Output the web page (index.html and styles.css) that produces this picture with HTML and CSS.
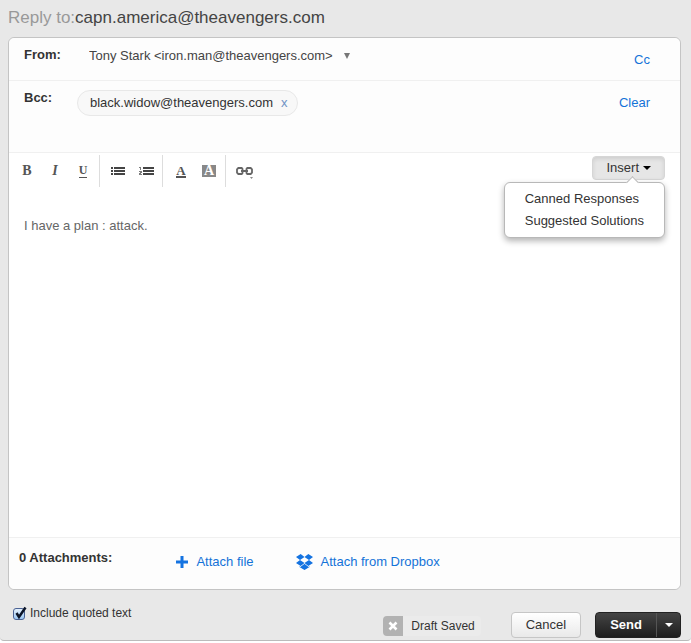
FILE: index.html
```html
<!DOCTYPE html>
<html lang="en">
<head>
    <meta charset="UTF-8">
    <meta name="viewport" content="width=device-width, initial-scale=1.0">
    <title>Reply</title>
    <link rel="stylesheet" href="styles.css">
</head>
<body>
    <form class="reply">
        <h1 class="reply-title"><span>Reply to:</span>capn.america@theavengers.com</h1>

        <div class="card">
            <div class="row from-row">
                <label class="row-label" for="from">From:</label>
                <div class="from-select">
                    <select id="from" name="from">
                        <option>Tony Stark &lt;iron.man@theavengers.com&gt;</option>
                    </select>
                    <svg width="6" height="6" viewBox="0 0 6 6"><path d="M0 0h6L3 6z" fill="#777"/></svg>
                </div>
                <a class="row-link" href="#cc">Cc</a>
            </div>

            <div class="row bcc-row">
                <span class="row-label">Bcc:</span>
                <div class="recipient">
                    black.widow@theavengers.com
                    <button type="button" aria-label="Remove">x</button>
                </div>
                <a class="row-link" href="#clear">Clear</a>
            </div>

            <div class="toolbar">
                <div class="tool-group">
                    <button type="button" class="tool">B</button>
                    <button type="button" class="tool italic">I</button>
                    <button type="button" class="tool underline"><span>U</span></button>
                </div>
                <div class="tool-group">
                    <button type="button" class="tool" aria-label="Bulleted list">
                        <svg width="14" height="8" viewBox="0 0 14 8" fill="#444"><path d="M0 0h2v2H0zM3 0h11v2H3zM0 3h2v2H0zM3 3h11v2H3zM0 6h2v2H0zM3 6h11v2H3z"/></svg>
                    </button>
                    <button type="button" class="tool" aria-label="Numbered list">
                        <svg width="15" height="8" viewBox="0 0 15 8" fill="#444"><path d="M4 0h11v2H4zM4 3h11v2H4zM4 6h11v2H4z"/><path d="M0 0h2v3H1V1H0zM0 4h3v2H2v1h1v1H0V6h1V5H0z" opacity=".7"/></svg>
                    </button>
                </div>
                <div class="tool-group">
                    <button type="button" class="tool text-color"><span>A</span></button>
                    <button type="button" class="tool back-color"><span>A</span></button>
                </div>
                <div class="tool-group">
                    <button type="button" class="tool" aria-label="Link">
                        <svg width="17" height="16" viewBox="0 0 17 16">
                            <path d="M6.500 7V5.800L5.700 5H2.300L1 6.300v3.400L2.300 11h3.400l.8-.8V9M10.500 7V5.800l.8-.8h3.400L16 6.300v3.400L14.700 11h-3.400l-.8-.8V9M5 8h7" fill="none" stroke="#666" stroke-width="1.800"/>
                            <path d="M14 14h3l-1.500 2z" fill="#888"/>
                        </svg>
                    </button>
                </div>
                <div class="insert">
                    <button type="button" class="insert-button">Insert
                        <svg width="8" height="4" viewBox="0 0 8 4"><path d="M0 0h8L4 4z"/></svg>
                    </button>
                    <ul class="insert-menu">
                        <li><a href="#canned">Canned Responses</a></li>
                        <li><a href="#solutions">Suggested Solutions</a></li>
                    </ul>
                </div>
            </div>

            <textarea class="message" name="message" aria-label="Message">I have a plan : attack.</textarea>

            <div class="attachments">
                <strong>0 Attachments:</strong>
                <a class="attach-file" href="#file">
                    <svg width="12" height="12" viewBox="0 0 12 12"><path d="M4.500 0h3v4.500H12v3H7.500V12h-3V7.500H0v-3h4.500z" fill="#1473e1"/></svg>
                    Attach file
                </a>
                <a class="attach-dropbox" href="#dropbox">
                    <svg width="17" height="16" viewBox="0 0 17 16" fill="#1473e1"><path d="M4.700 0L8.500 2.900 4 5.900 0 3zM12.300 0L17 3l-4 2.900-4.500-3zM4 5.900l4.500 3-3.800 3L0 8.900zM13 5.900l4 3-4.700 3-3.800-3zM3.500 12.200l1.200.8 3.800-3 3.800 3 1.200-.8v.9L8.500 16l-5-2.900z"/><path d="M8.500 10l3.800 3-3.800 2.600L4.700 13z"/></svg>
                    Attach from Dropbox
                </a>
            </div>
        </div>

        <div class="footer">
            <label class="quoted">
                <span class="check">
                    <input type="checkbox" name="quoted" checked>
                    <svg width="14" height="15" viewBox="0 0 14 15"><path d="M3.500 7l2.500 4L12.500 1.500" fill="none" stroke="#0b1428" stroke-width="2.500"/></svg>
                </span>
                Include quoted text
            </label>
            <div class="draft">
                <button type="button" aria-label="Discard draft">
                    <svg width="10" height="10" viewBox="0 0 10 10"><path d="M1.500 1.500l7 7M8.500 1.500l-7 7" stroke="#fff" stroke-width="2.600"/></svg>
                </button>
                <span>Draft Saved</span>
            </div>
            <button type="button" class="cancel">Cancel</button>
            <div class="send-group">
                <button type="submit" class="send">Send</button>
                <button type="button" class="send-more" aria-label="More send options">
                    <svg width="8" height="4" viewBox="0 0 8 4"><path d="M0 0h8L4 4z" fill="#fff"/></svg>
                </button>
            </div>
        </div>
    </form>
</body>
</html>
```
FILE: styles.css
```css
* {
    box-sizing: border-box;
}
body {
    display: flex;
    min-height: 100vh;
    margin: 0;
    padding-bottom: 2px;
    background-color: #fff;
    color: #333;
    font-family: "Liberation Sans", Arial, sans-serif;
    font-size: 13px;
    line-height: 16px;
}
button, select, textarea {
    margin: 0;
    padding: 0;
    border: none;
    background: none;
    color: inherit;
    font: inherit;
}
button {
    cursor: pointer;
}
svg {
    display: block;
    flex: none;
}
a {
    color: #1473d8;
    text-decoration: none;
}

.reply {
    display: flex;
    flex-direction: column;
    flex: 1;
    min-width: 0;
    padding: 0 10px 0 8px;
    background-color: #e8e8e8;
    border-bottom: 1px solid #bbb;
    border-radius: 0 0 4px 4px;
}
.reply-title {
    margin: 0;
    padding: 7px 0 8px;
    color: #444;
    font-size: 17px;
    font-weight: normal;
    line-height: 22px;
}
.reply-title span {
    color: #999;
}

.card {
    display: flex;
    flex-direction: column;
    flex: 1;
    background-color: #fff;
    border: 1px solid #c4c4c4;
    border-radius: 6px;
}

/* From and Bcc rows */
.row {
    display: flex;
    align-items: flex-start;
    padding: 0 30px 0 15px;
    background-color: #fdfdfd;
    border-bottom: 1px solid #f0f0f0;
}
.from-row {
    height: 43px;
    border-radius: 6px 6px 0 0;
}
.bcc-row {
    height: 72px;
}
.row-label {
    width: 53px;
    padding-top: 9px;
    font-weight: bold;
}
.from-select {
    display: flex;
    align-items: center;
    margin: 9px 0 0 12px;
}
.from-select select {
    height: 18px;
    margin-right: 11px;
    appearance: none;
    color: #444;
}
.recipient {
    display: flex;
    gap: 8px;
    margin-top: 9px;
    padding: 4px 9px 4px 12px;
    background-color: #f8f8f8;
    border: 1px solid #e8e8e8;
    border-radius: 13px;
}
.recipient button {
    color: #6f93c4;
}
.row-link {
    margin-left: auto;
    padding-top: 14px;
}

/* Formatting toolbar */
.toolbar {
    display: flex;
    height: 34px;
    padding: 2px 15px 0 0;
}
.tool-group {
    display: flex;
    height: 32px;
    padding: 0 2px 0 4px;
    border-right: 1px solid #ddd;
}
.tool-group:nth-child(4) {
    border-right: none;
}
.tool {
    display: flex;
    align-items: center;
    justify-content: center;
    width: 28px;
    color: #555;
    font-family: "Liberation Serif", serif;
    font-size: 14px;
    font-weight: bold;
}
.italic {
    font-style: italic;
}
.underline span {
    border-bottom: 1px solid #555;
    font-size: 12px;
    line-height: 13px;
}
.text-color span {
    width: 10px;
    border-bottom: 2px solid #555;
    font-size: 13px;
    line-height: 11px;
}
.back-color span {
    width: 14px;
    background-color: #888;
    color: #fff;
    line-height: 12px;
}

/* Insert drop-down */
.insert {
    position: relative;
    margin: 1px 0 0 auto;
}
.insert-button {
    display: flex;
    align-items: center;
    gap: 4px;
    height: 24px;
    padding: 0 13px;
    background-color: #e6e6e6;
    border: 1px solid #d6d6d6;
    border-radius: 4px;
    box-shadow: inset 0 2px 4px rgba(0, 0, 0, 0.1);
}
.insert-menu {
    position: absolute;
    top: 26px;
    right: 0;
    margin: 0;
    padding: 5px 20px;
    background-color: #fff;
    border: 1px solid #b8b8b8;
    border-radius: 6px;
    box-shadow: 0 3px 6px rgba(0, 0, 0, 0.3);
    list-style: none;
    line-height: 22px;
    white-space: nowrap;
}
.insert-menu::before {
    content: "";
    position: absolute;
    top: -5px;
    right: 27px;
    width: 8px;
    height: 8px;
    background-color: #fff;
    border: solid #b8b8b8;
    border-width: 1px 0 0 1px;
    transform: rotate(45deg);
}
.insert-menu a {
    color: #333;
}

.message {
    flex: 1;
    width: 100%;
    min-height: 120px;
    padding: 31px 15px;
    outline: none;
    resize: none;
    color: #666;
}

/* Attachments */
.attachments {
    display: flex;
    align-items: flex-start;
    height: 52px;
    padding: 12px 10px;
    background-color: #fdfdfd;
    border-top: 1px solid #f0f0f0;
    border-radius: 0 0 6px 6px;
}
.attachments a {
    display: flex;
    align-items: center;
    gap: 8px;
    padding-top: 4px;
}
.attach-file {
    margin-left: 64px;
}
.attach-dropbox {
    margin-left: 42px;
}

/* Footer actions */
.footer {
    display: flex;
    align-items: flex-end;
    height: 50px;
    padding-bottom: 2px;
}
.quoted {
    display: flex;
    align-items: center;
    gap: 3px;
    margin: 0 auto 17px 5px;
    font-size: 12px;
}
.check {
    display: grid;
}
.check input {
    grid-area: 1 / 1;
    width: 12px;
    height: 12px;
    margin: 2px 0 0;
    appearance: none;
    background: linear-gradient(#e4f0fc, #9cc8f4);
    border: 1px solid #4a6294;
    border-radius: 3px;
}
.check svg {
    grid-area: 1 / 1;
    pointer-events: none;
    visibility: hidden;
}
.check input:checked + svg {
    visibility: visible;
}
.draft {
    display: flex;
    margin: 0 30px 2px 0;
    background-color: #ebebeb;
    border-radius: 4px;
    font-size: 12px;
    line-height: 20px;
}
.draft button {
    display: flex;
    align-items: center;
    justify-content: center;
    width: 20px;
    background-color: #b2b2b2;
    border-radius: 4px 0 0 4px;
}
.draft span {
    padding: 0 6px 0 8px;
}
.cancel {
    height: 26px;
    margin-right: 14px;
    padding: 0 14px;
    background: linear-gradient(#fff, #e9e9e9);
    border: 1px solid #c6c6c6;
    border-radius: 4px;
}
.send-group {
    display: flex;
    height: 26px;
    background: linear-gradient(#444, #1e1e1e);
    border: 1px solid #222;
    border-radius: 4px;
    color: #fff;
}
.send {
    padding: 0 14px;
    font-weight: bold;
}
.send-more {
    display: flex;
    align-items: center;
    justify-content: center;
    width: 24px;
    border-left: 1px solid #555;
}
```
